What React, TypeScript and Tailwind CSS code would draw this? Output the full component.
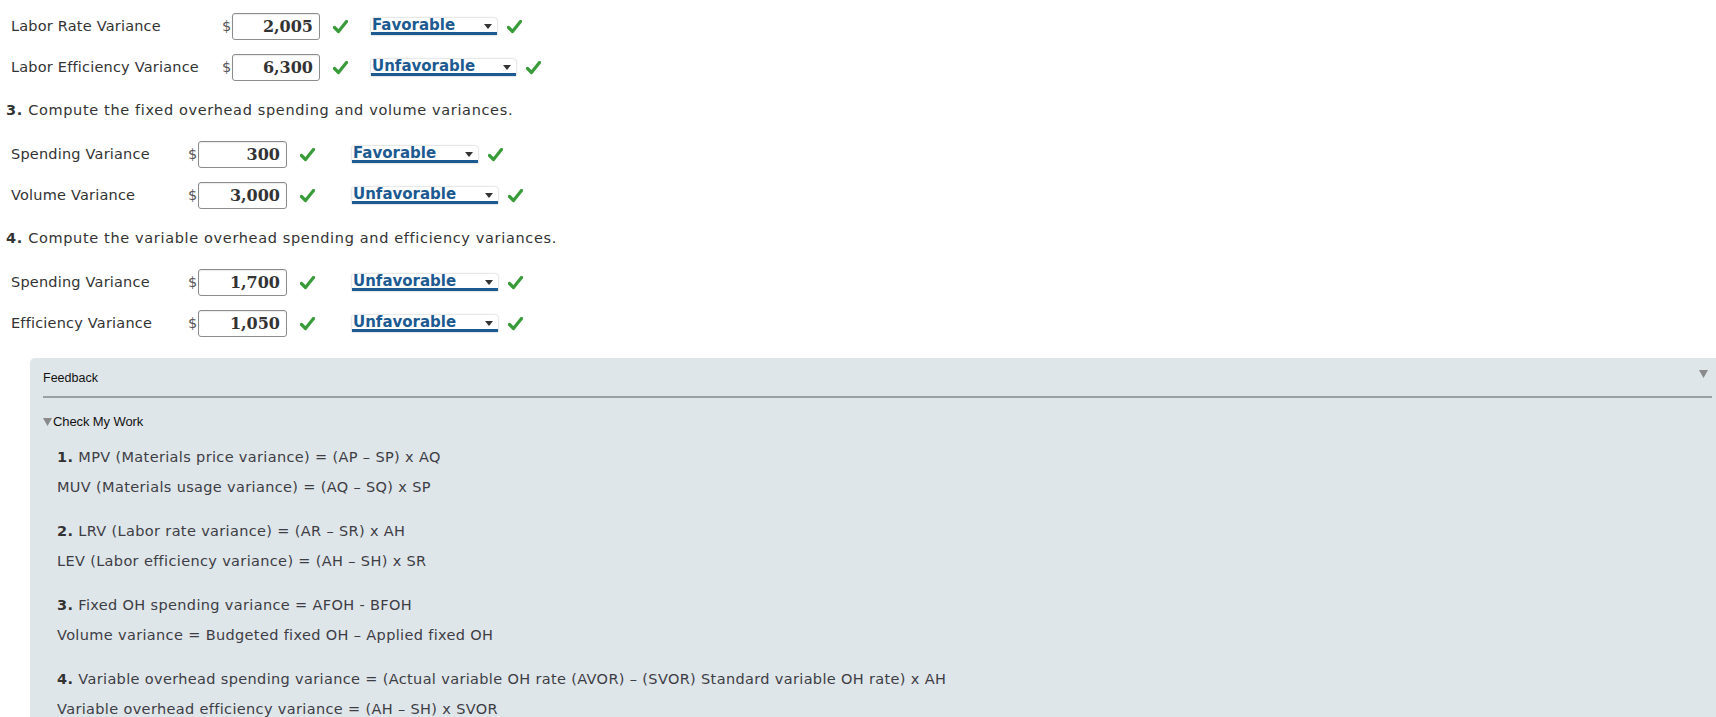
const sans = "font-['Verdana','DejaVu_Sans',sans-serif]";

function Check() {
  return (
    <svg width="15" height="14" viewBox="0 0 15 14" className="shrink-0">
      <path d="M1.5 7.5 L5.5 11.5 L13.5 1.5" fill="none" stroke="#3a9b3a" strokeWidth="3.2" strokeLinecap="round" strokeLinejoin="round" />
    </svg>
  );
}

function Select({ text, w }: { text: string; w: number }) {
  return (
    <div
      className="relative flex h-[17px] items-end rounded-t-[3px] border-b-[3px] border-[#1d5a91] bg-white shadow-[0_0_2px_rgba(0,0,0,0.35)]"
      style={{ width: w }}
    >
      <span className={`${sans} pl-[1px] text-[15px] leading-[13px] font-bold text-[#1d5a91]`}>{text}</span>
      <svg width="8" height="5" viewBox="0 0 8 5" className="absolute right-[5px] top-[6px]">
        <path d="M0 0 H8 L4 5 Z" fill="#333" />
      </svg>
    </div>
  );
}

type RowProps = {
  label: string;
  labelW: number;
  value: string;
  inputW: number;
  sel: string;
  selW: number;
  gapCS: number;
};

function Row({ label, labelW, value, inputW, sel, selW, gapCS }: RowProps) {
  return (
    <div className="flex h-[41px] items-center pl-[11px]">
      <div className={`${sans} shrink-0 text-[14.5px] tracking-[0.2px] text-[#333]`} style={{ width: labelW }}>
        {label}
      </div>
      <span className={`${sans} w-[10px] text-[14.5px] text-[#555]`}>$</span>
      <div
        className="flex h-[27px] items-center justify-end rounded-[3px] border border-[#8c8c8c] bg-white pr-[6px] shadow-[inset_0_1px_1px_rgba(0,0,0,0.08)]"
        style={{ width: inputW }}
      >
        <span className="font-['DejaVu_Serif',serif] text-[16px] font-bold text-[#333]">{value}</span>
      </div>
      <div className="ml-[13px]">
        <Check />
      </div>
      <div style={{ marginLeft: gapCS }}>
        <Select text={sel} w={selW} />
      </div>
      <div className="ml-[10px]">
        <Check />
      </div>
    </div>
  );
}

function Heading({ num, text }: { num: string; text: string }) {
  return (
    <div className={`${sans} flex h-[46px] items-center pl-[6px] text-[14.5px] tracking-[0.65px] text-[#333]`}>
      <span className="font-bold">{num}</span>&nbsp;{text}
    </div>
  );
}

function Line({ num, text, first }: { num?: string; text: string; first?: boolean }) {
  return (
    <div className={`${sans} flex h-[30px] items-center text-[14.5px] tracking-[0.35px] text-[#3d3d45] ${first ? "mt-[14px]" : ""}`}>
      {num && <span className="mr-[5px] font-bold text-[#333]">{num}</span>}
      {text}
    </div>
  );
}

export default function App() {
  return (
    <div className="min-h-[717px] overflow-hidden bg-white pt-[6px]">
      <Row label="Labor Rate Variance" labelW={211} value="2,005" inputW={88} sel="Favorable" selW={126} gapCS={23} />
      <Row label="Labor Efficiency Variance" labelW={211} value="6,300" inputW={88} sel="Unfavorable" selW={145} gapCS={23} />
      <Heading num="3." text="Compute the fixed overhead spending and volume variances." />
      <Row label="Spending Variance" labelW={177} value="300" inputW={89} sel="Favorable" selW={126} gapCS={37} />
      <Row label="Volume Variance" labelW={177} value="3,000" inputW={89} sel="Unfavorable" selW={146} gapCS={37} />
      <Heading num="4." text="Compute the variable overhead spending and efficiency variances." />
      <Row label="Spending Variance" labelW={177} value="1,700" inputW={89} sel="Unfavorable" selW={146} gapCS={37} />
      <Row label="Efficiency Variance" labelW={177} value="1,050" inputW={89} sel="Unfavorable" selW={146} gapCS={37} />

      <div className="ml-[30px] mt-[14px] rounded-tl-[5px] bg-[#dfe6e9] pb-[20px] pl-[13px] pr-[4px]">
        <div className="flex h-[40px] items-center justify-between border-b-2 border-[#9aa0a4] pt-[2px]">
          <span className="font-['Liberation_Sans',Arial,sans-serif] text-[12.5px] text-[#111]">Feedback</span>
          <svg width="9" height="8" viewBox="0 0 9 8" className="mr-[4px] -mt-[8px]">
            <path d="M0 0 H9 L4.5 8 Z" fill="#8a8a8a" />
          </svg>
        </div>
        <div className="flex h-[46px] items-center gap-[1px] pt-[2px]">
          <svg width="9" height="8" viewBox="0 0 9 8">
            <path d="M0 0 H9 L4.5 8 Z" fill="#8a8a8a" />
          </svg>
          <span className="font-['Liberation_Sans',Arial,sans-serif] text-[13px] tracking-[-0.1px] text-[#111]">Check My Work</span>
        </div>
        <div className="pl-[14px] -mt-[15px]">
          <Line first num="1." text="MPV (Materials price variance) = (AP – SP) x AQ" />
          <Line text="MUV (Materials usage variance) = (AQ – SQ) x SP" />
          <Line first num="2." text="LRV (Labor rate variance) = (AR – SR) x AH" />
          <Line text="LEV (Labor efficiency variance) = (AH – SH) x SR" />
          <Line first num="3." text="Fixed OH spending variance = AFOH - BFOH" />
          <Line text="Volume variance = Budgeted fixed OH – Applied fixed OH" />
          <Line first num="4." text="Variable overhead spending variance = (Actual variable OH rate (AVOR) – (SVOR) Standard variable OH rate) x AH" />
          <Line text="Variable overhead efficiency variance = (AH – SH) x SVOR" />
        </div>
      </div>
    </div>
  );
}
